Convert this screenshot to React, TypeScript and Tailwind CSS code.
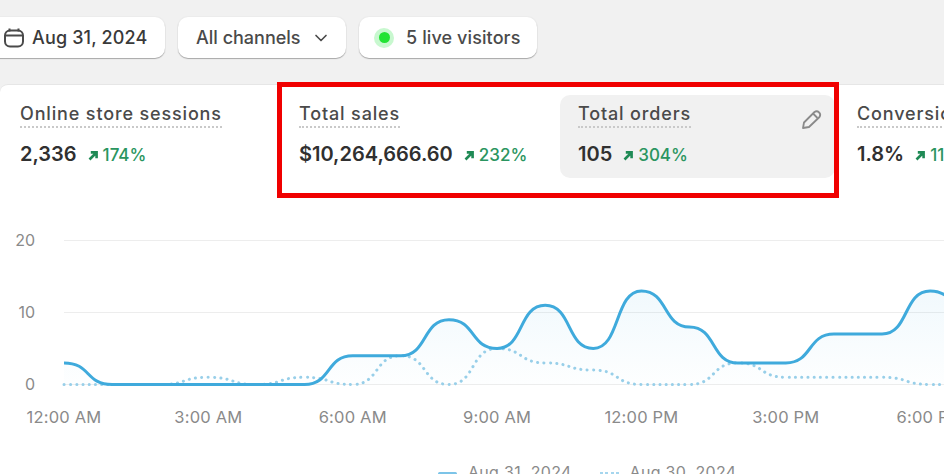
import { ChevronDown } from "lucide-react";

const HOUR = 48.12;
const X0 = 64;
const Y0 = 384.5;
const UNIT = 7.2;

const current = [3, 0, 0, 0, 0, 0, 4, 4, 9, 5, 11, 5, 13, 8, 3, 3, 7, 7, 13, 9];
const previous = [0, 0, 0, 1, 0, 1, 0, 4, 0, 5, 3, 2, 0, 0, 3, 1, 1, 1, 0, 0];

// horizontal tangents at every point, handles a bit longer than half a step
function linePath(values: number[]) {
  return values
    .map((v, i) => {
      const x = X0 + i * HOUR;
      const y = Y0 - v * UNIT;
      if (i === 0) return `M${x} ${y}`;
      const px = X0 + (i - 1) * HOUR;
      const py = Y0 - values[i - 1] * UNIT;
      const handle = HOUR * 0.56;
      return `C${px + handle} ${py} ${x - handle} ${y} ${x} ${y}`;
    })
    .join("");
}

const xLabels = [
  { hour: 0, text: "12:00 AM" },
  { hour: 3, text: "3:00 AM" },
  { hour: 6, text: "6:00 AM" },
  { hour: 9, text: "9:00 AM" },
  { hour: 12, text: "12:00 PM" },
  { hour: 15, text: "3:00 PM" },
  { hour: 18, text: "6:00 PM" },
];

function UpArrow() {
  return (
    <svg width="11" height="11" viewBox="0 0 11 11" fill="none" stroke="#1f8a55" strokeWidth="2.6" className="shrink-0">
      <path d="M1.5 9.5 7.5 3.5M2.8 2.4h5.8V8.2" />
    </svg>
  );
}

function Metric({
  title,
  value,
  change,
  active,
}: {
  title: string;
  value: string;
  change: string;
  active?: boolean;
}) {
  return (
    <div className={`relative h-[83px] w-[275px] shrink-0 rounded-[10px] pl-[18px] pt-[7px] ${active ? "bg-[#f1f1f1]" : ""}`}>
      <span className="inline-block border-b-2 border-dotted border-[#c9c9c9] pb-[1px] text-[18px] font-medium leading-[23px] tracking-[0.85px] text-[#4a4a4a]">
        {title}
      </span>
      <div className="mt-[12px] flex items-center whitespace-nowrap">
        <span className="text-[20px] font-semibold leading-[28px] text-[#303030]">{value}</span>
        <span className="ml-[11px] mt-[2px] flex items-center gap-[4px] text-[17px] font-medium leading-[24px] text-[#2a9560]">
          <UpArrow />
          {change}
        </span>
      </div>
      {active && (
        <svg width="24" height="24" viewBox="0 0 24 24" fill="none" stroke="#8a8a8a" strokeWidth="1.8" className="absolute left-[240px] top-[12px]">
          <path d="M3 21 4 15.5 14.5 5a3.6 3.6 0 0 1 5 5L9 20z" strokeLinejoin="round" />
          <path d="M13 6.5 17.5 11" />
        </svg>
      )}
    </div>
  );
}

export default function App() {
  const font = { fontFamily: "Inter, 'Liberation Sans', sans-serif" };
  const solid = linePath(current);
  const lastX = X0 + (current.length - 1) * HOUR;

  return (
    <div style={font} className="relative h-[474px] w-[944px] overflow-hidden bg-[#f1f1f1]">
      {/* Top filters */}
      <div className="flex h-[84px] items-start gap-[13px] pt-[17px]">
        <button className="-ml-[15px] flex h-[41px] w-[180px] items-center gap-[8px] rounded-[10px] bg-white pl-[19px] text-[18px] font-medium tracking-[0.15px] text-[#3a3a3a] shadow-[0_1px_1px_#a8a8a8,0_0_0_1px_#ececec]">
          <svg width="20" height="20" viewBox="0 0 20 20" fill="none" stroke="#4a4a4a" strokeWidth="2">
            <rect x="1" y="2.5" width="18" height="16" rx="5" />
            <path d="M1 7.5h18M5.5 0.5v3M14.5 0.5v3" />
          </svg>
          Aug 31, 2024
        </button>
        <button className="flex h-[41px] w-[168px] items-center rounded-[10px] bg-white pl-[18px] text-[18px] font-medium text-[#4a4a4a] shadow-[0_1px_1px_#a8a8a8,0_0_0_1px_#ececec]">
          All channels
          <ChevronDown size={20} strokeWidth={2} className="ml-[10px] text-[#4a4a4a]" />
        </button>
        <button className="flex h-[41px] w-[178px] items-center gap-[12px] rounded-[10px] bg-white pl-[15px] text-[18px] font-medium tracking-[0.1px] text-[#4a4a4a] shadow-[0_1px_1px_#a8a8a8,0_0_0_1px_#ececec]">
          <span className="flex h-[20px] w-[20px] items-center justify-center rounded-full bg-[#c8f8cf]">
            <span className="h-[11px] w-[11px] rounded-full bg-[#22e334]" />
          </span>
          5 live visitors
        </button>
      </div>

      {/* Main card */}
      <div className="h-[390px] rounded-tl-[8px] border-t border-[#e6e6e6] bg-white">
        <div className="flex gap-[4px] pl-[2px] pt-[10px]">
          <Metric title="Online store sessions" value="2,336" change="174%" />
          <Metric title="Total sales" value="$10,264,666.60" change="232%" />
          <Metric title="Total orders" value="105" change="304%" active />
          <Metric title="Conversion rate" value="1.8%" change="118%" />
        </div>

        <svg width="944" height="234" viewBox="0 226 944 234" className="mt-[48px] block">
          <defs>
            <linearGradient id="fill" x1="0" y1="0" x2="0" y2="1">
              <stop offset="0" stopColor="#4fb3e3" stopOpacity="0.08" />
              <stop offset="1" stopColor="#4fb3e3" stopOpacity="0.01" />
            </linearGradient>
          </defs>
          {[20, 10, 0].map((v) => (
            <g key={v}>
              <line x1={X0} x2={944} y1={Y0 - v * UNIT} y2={Y0 - v * UNIT} stroke="#ededed" strokeWidth="1.2" />
              <text x={35} y={Y0 - v * UNIT + 5} textAnchor="end" fontSize="16" fill="#8a8a8a">
                {v}
              </text>
            </g>
          ))}
          <path d={`${solid}L${lastX} ${Y0}L${X0} ${Y0}Z`} fill="url(#fill)" />
          <path d={linePath(previous)} fill="none" stroke="#98cfe9" strokeWidth="3" strokeLinecap="round" strokeDasharray="0.1 6.2" />
          <path d={solid} fill="none" stroke="#3faadc" strokeWidth="3" />
          {xLabels.map((l) => (
            <text key={l.text} x={X0 + l.hour * HOUR} y={423} textAnchor="middle" fontSize="16.5" letterSpacing="0.2" fill="#8a8a8a">
              {l.text}
            </text>
          ))}
        </svg>

        {/* Legend, cut off by the bottom of the window */}
        <div className="ml-[438px] flex items-start text-[16px] leading-[24px] tracking-[0.3px] text-[#8a8a8a]">
          <span className="mt-[12px] h-[3px] w-[19px] rounded-full bg-[#7cc4e8]" />
          <span className="ml-[11px]">Aug 31, 2024</span>
          <span className="ml-[28px] mt-[12px] h-[3px] w-[19px] border-t-[3px] border-dotted border-[#a6d6ee]" />
          <span className="ml-[11px]">Aug 30, 2024</span>
        </div>
      </div>

      {/* Highlight drawn over the two tiles */}
      <div className="absolute left-[277px] top-[82px] h-[116px] w-[562px] border-[5px] border-[#f00000]" />
    </div>
  );
}
